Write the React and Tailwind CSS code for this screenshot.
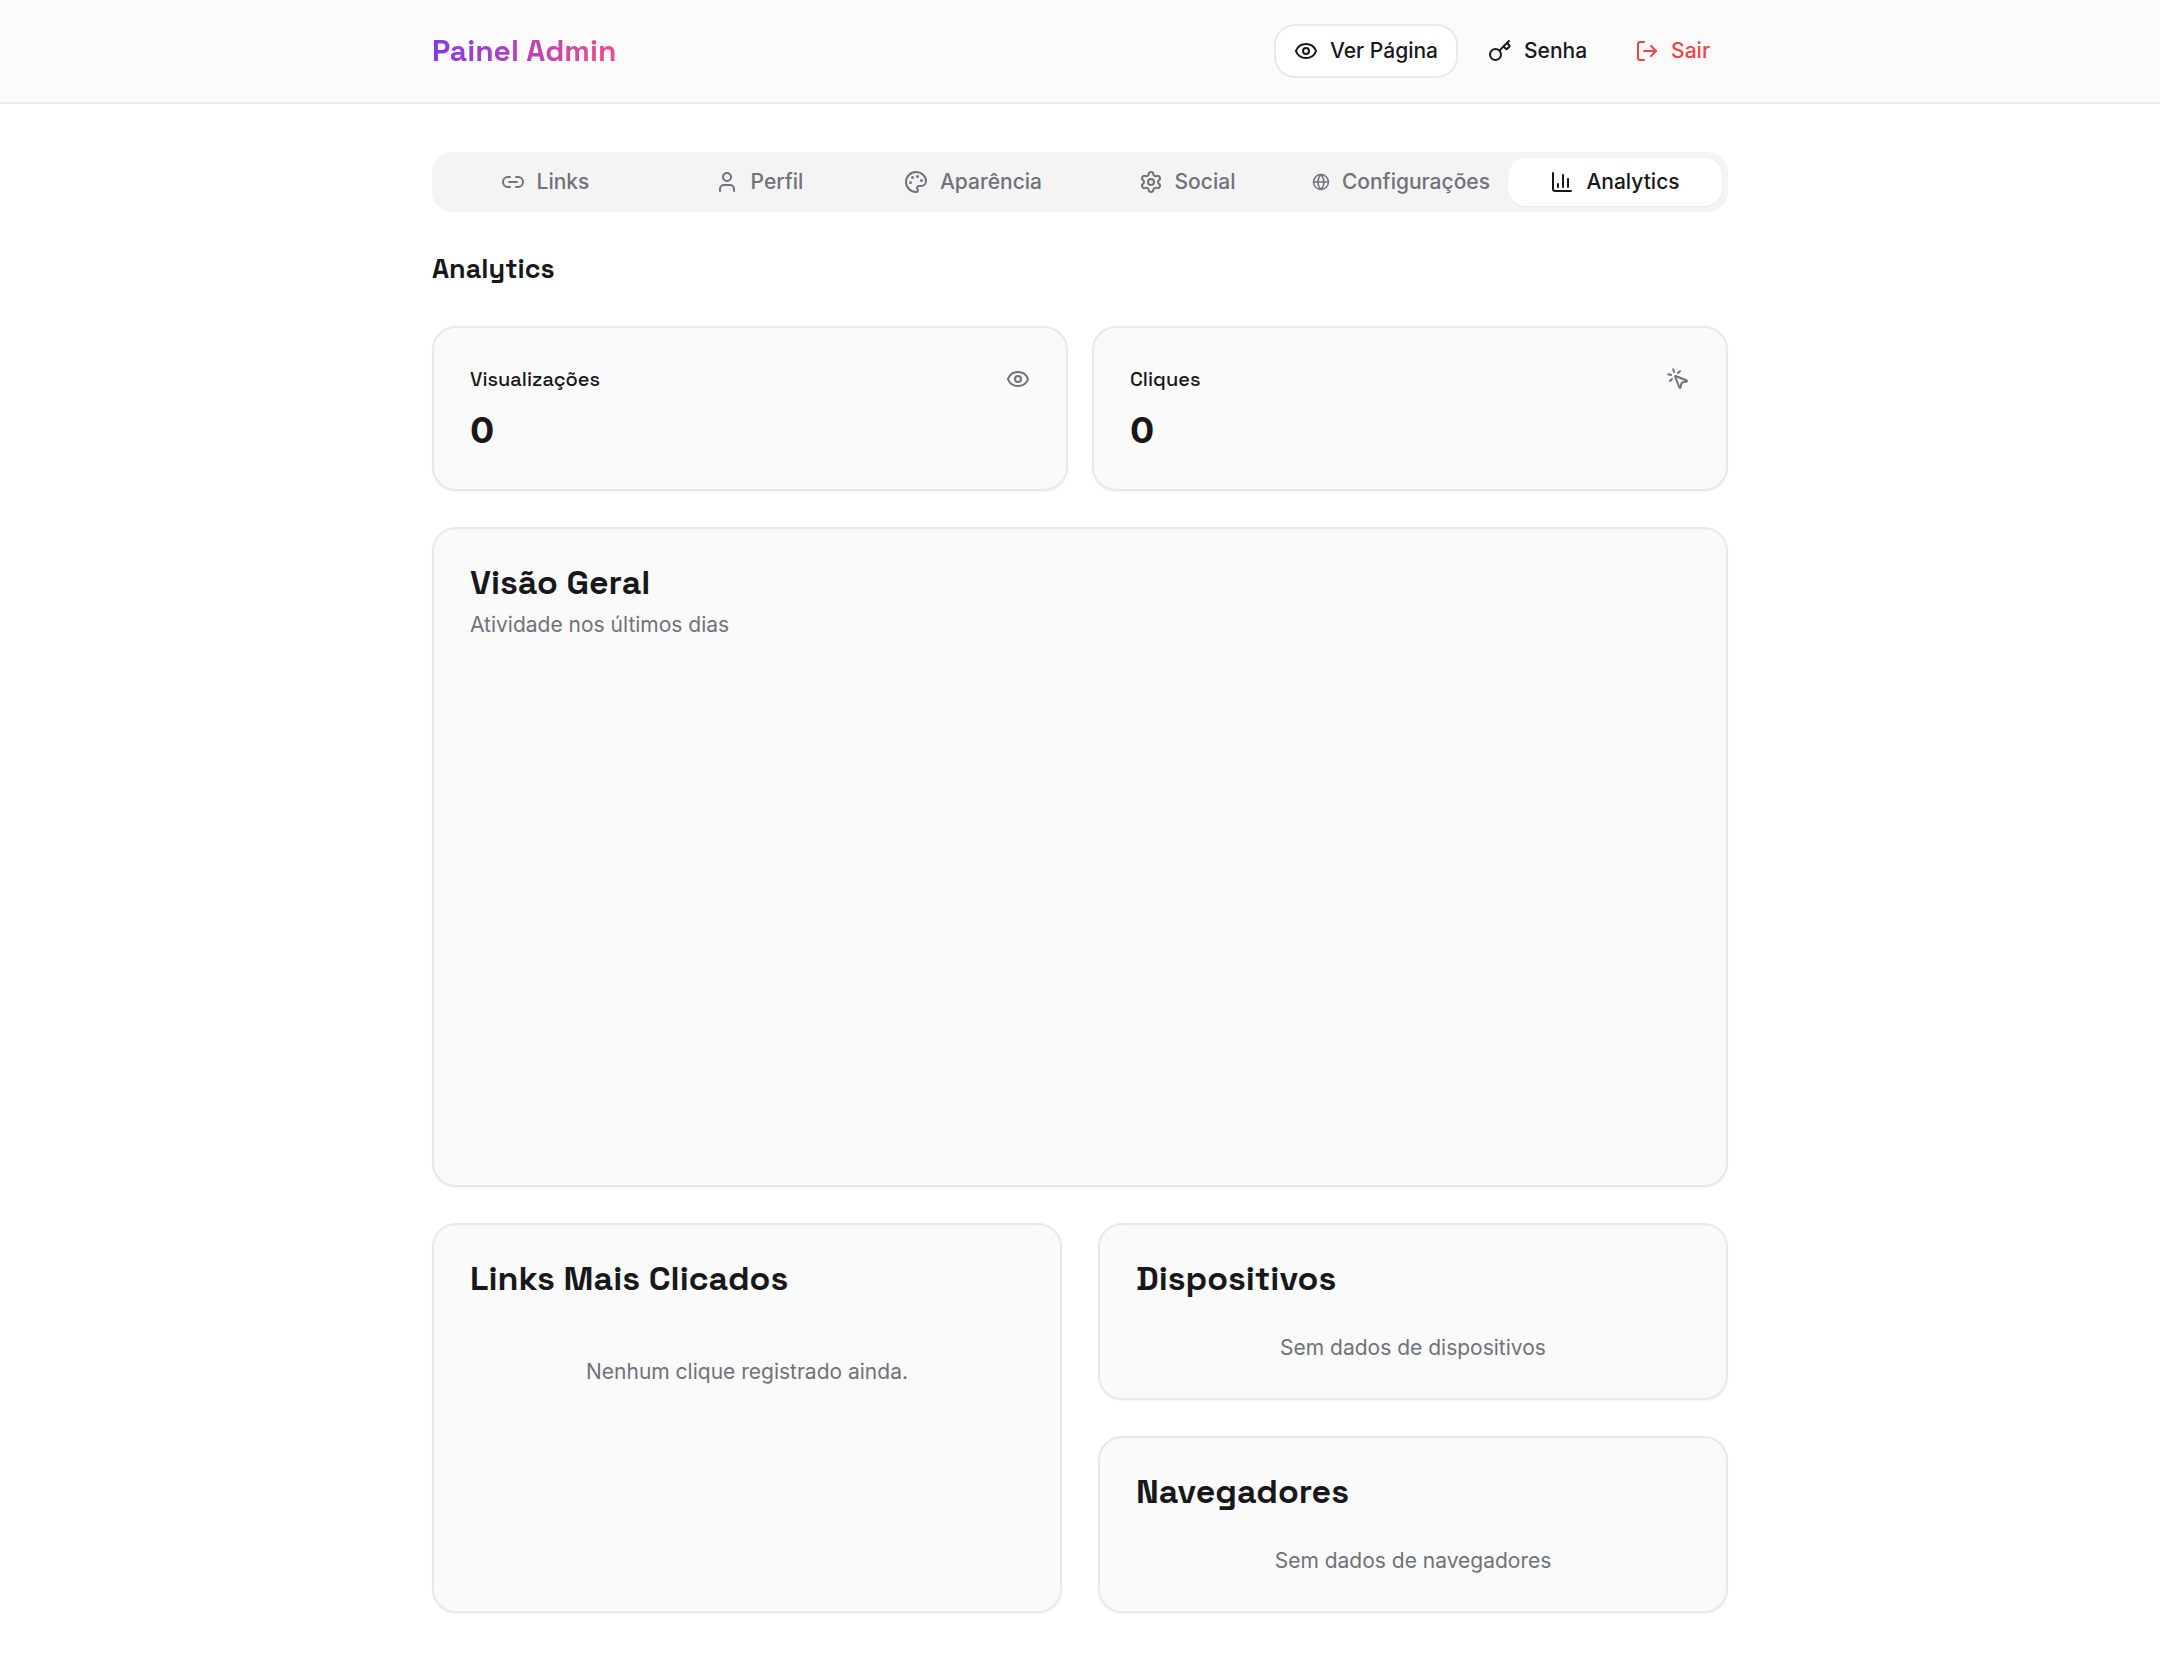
import React, { useState } from 'react';
import {
  ChartColumn,
  Eye,
  Globe,
  Key,
  Link2,
  LogOut,
  MousePointerClick,
  Palette,
  Settings,
  User,
} from 'lucide-react';

const tabs = [
  { id: 'links', label: 'Links', icon: Link2 },
  { id: 'profile', label: 'Perfil', icon: User },
  { id: 'appearance', label: 'Aparência', icon: Palette },
  { id: 'social', label: 'Social', icon: Settings },
  { id: 'settings', label: 'Configurações', icon: Globe },
  { id: 'analytics', label: 'Analytics', icon: ChartColumn },
];

const stats = [
  { label: 'Visualizações', value: 0, icon: Eye },
  { label: 'Cliques', value: 0, icon: MousePointerClick },
];

function Card({ children }) {
  return (
    <section className="rounded-3xl border-2 border-[#e9e9eb] bg-[#fafafa] px-9 pt-9 pb-[35px] shadow-xs">
      {children}
    </section>
  );
}

function CardTitle({ children }) {
  return (
    <h3 className="font-['Space_Grotesk',Inter,sans-serif] text-[34px] leading-9 font-semibold">
      {children}
    </h3>
  );
}

function Header() {
  return (
    <header className="border-b-2 border-[#e9e9eb] bg-[#fbfbfb]">
      <div className="mx-auto flex max-w-[1344px] items-center justify-between px-6 py-6">
        <h1 className="bg-linear-to-r/srgb from-[#8339e8] to-[#ec4d8b] bg-clip-text font-['Space_Grotesk',Inter,sans-serif] text-[30px] leading-[42px] font-bold text-transparent">
          Painel Admin
        </h1>
        <div className="flex items-center gap-3 text-[21px] leading-[30px] font-medium">
          <a href="#pagina" className="flex h-[54px] items-center gap-3 rounded-[21px] border-2 border-[#e9e9eb] bg-white px-[18px]">
            <Eye className="size-6" />
            Ver Página
          </a>
          <button className="flex h-[54px] items-center gap-3 px-[18px]">
            <Key className="size-6" />
            Senha
          </button>
          <button className="flex h-[54px] items-center gap-3 px-[18px] text-[#ef4444]">
            <LogOut className="size-6" />
            Sair
          </button>
        </div>
      </div>
    </header>
  );
}

function AnalyticsPanel() {
  return (
    <div className="mt-9 space-y-9">
      <h2 className="font-['Space_Grotesk',Inter,sans-serif] text-[27px] leading-[42px] font-semibold">
        Analytics
      </h2>

      <div className="grid grid-cols-2 gap-6">
        {stats.map(({ label, value, icon: Icon }) => (
          <Card key={label}>
            <div className="flex items-center justify-between pb-3">
              <h3 className="font-['Space_Grotesk',Inter,sans-serif] text-[20px] leading-[30px] font-medium">
                {label}
              </h3>
              <Icon className="size-6 text-[#71717a]" />
            </div>
            <div className="text-[36px] leading-[48px] font-bold">{value}</div>
          </Card>
        ))}
      </div>

      <Card>
        <CardTitle>Visão Geral</CardTitle>
        <p className="mt-[9px] text-[21px] leading-[30px] text-[#71717a]">Atividade nos últimos dias</p>
        {/* Chart area, empty until there is activity */}
        <div className="mt-9 h-[474px]" />
      </Card>

      <div className="grid grid-cols-2 gap-9">
        <Card>
          <CardTitle>Links Mais Clicados</CardTitle>
          <p className="mt-9 py-6 text-center text-[21px] leading-[30px] text-[#71717a]">
            Nenhum clique registrado ainda.
          </p>
        </Card>
        <div className="space-y-9">
          <Card>
            <CardTitle>Dispositivos</CardTitle>
            <p className="mt-9 text-center text-[21px] leading-[30px] text-[#71717a]">Sem dados de dispositivos</p>
          </Card>
          <Card>
            <CardTitle>Navegadores</CardTitle>
            <p className="mt-9 text-center text-[21px] leading-[30px] text-[#71717a]">Sem dados de navegadores</p>
          </Card>
        </div>
      </div>
    </div>
  );
}

export default function App() {
  const [activeTab, setActiveTab] = useState('analytics');

  return (
    <div className="min-h-screen bg-white font-[Inter,sans-serif] text-[#18181b] antialiased">
      <Header />
      <main className="mx-auto max-w-[1344px] px-6 py-12">
        <div role="tablist" className="grid grid-cols-6 rounded-[21px] bg-[#f4f4f4] p-1.5 text-[21px] leading-[30px] font-medium">
          {tabs.map(({ id, label, icon: Icon }) => (
            <button
              key={id}
              role="tab"
              aria-selected={activeTab === id}
              onClick={() => setActiveTab(id)}
              className={`flex min-w-0 items-center justify-center gap-3 rounded-[18px] px-[18px] py-[9px] ${
                activeTab === id ? 'bg-white text-[#18181b] shadow-xs' : 'text-[#71717a]'
              }`}
            >
              <Icon className="h-6 w-6" />
              {label}
            </button>
          ))}
        </div>

        {activeTab === 'analytics' && <AnalyticsPanel />}
      </main>
    </div>
  );
}
